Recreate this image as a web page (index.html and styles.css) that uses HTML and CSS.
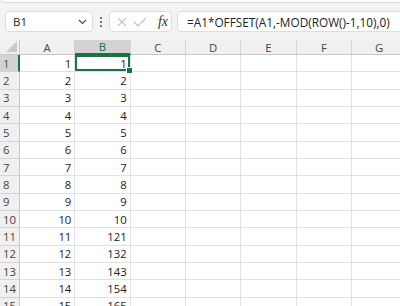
FILE: index.html
```html
<!DOCTYPE html>
<html>
<head>
    <title>Foglio</title>
    <link rel="stylesheet" href="styles.css">
</head>
<body>
    <div class="ribbon-edge"></div>

    <div class="formula-row">
        <div class="name-box">
            <span>B1</span>
            <svg class="chevron" width="9" height="6" viewBox="0 0 9 6"><path d="M1 1 L4.5 4.5 L8 1" fill="none" stroke="#444" stroke-width="1.1"/></svg>
        </div>
        <div class="dots"><i></i><i></i><i></i></div>
        <div class="fx-buttons">
            <svg width="10" height="10" viewBox="0 0 10 10"><path d="M1 1 L9 9 M9 1 L1 9" stroke="#bdbdbd" stroke-width="1.1"/></svg>
            <svg width="14" height="10" viewBox="0 0 14 10"><path d="M1 5 L5 9 L13 1" fill="none" stroke="#bdbdbd" stroke-width="1.1"/></svg>
            <span class="fx">fx</span>
        </div>
        <div class="formula">=A1*OFFSET(A1,-MOD(ROW()-1,10),0)</div>
    </div>

    <div class="sheet" id="sheet"></div>

    <script>
        var cols = ['A', 'B', 'C', 'D', 'E', 'F', 'G'];
        var sheet = document.getElementById('sheet');
        var html = '<div class="corner"><span class="tri"></span></div>';
        for (var c = 0; c < cols.length; c++) {
            html += '<div class="col-head' + (c == 1 ? ' sel' : '') + '">' + cols[c] + '</div>';
        }
        for (var r = 1; r <= 15; r++) {
            var b = r <= 10 ? r : r * 11;
            html += '<div class="row-head' + (r == 1 ? ' sel' : '') + '">' + r + '</div>';
            html += '<div class="cell">' + r + '</div>';
            html += '<div class="cell' + (r == 1 ? ' active' : '') + '">' + b + (r == 1 ? '<span class="handle"></span>' : '') + '</div>';
            for (var k = 2; k < cols.length; k++) {
                html += '<div class="cell"></div>';
            }
        }
        sheet.innerHTML = html;
    </script>
</body>
</html>
```

FILE: styles.css
```css
body {
    margin: 0;
    background-color: #f3f3f3;
    font-family: "Open Sans", "Noto Sans", sans-serif;
    color: #222;
    overflow: hidden;
}

.ribbon-edge {
    height: 2px;
    margin-left: 1px;
    background-color: #fbfbfb;
    border-bottom: 1px solid #dcdcdc;
    border-left: 1px solid #dcdcdc;
    border-bottom-left-radius: 4px;
}

.formula-row {
    display: flex;
    align-items: center;
    height: 21px;
    padding: 8px 0 0 5px;
}

.name-box {
    display: flex;
    align-items: center;
    justify-content: space-between;
    box-sizing: border-box;
    width: 88px;
    height: 21px;
    padding: 0 5px 0 7px;
    background-color: #fff;
    border: 1px solid #dedede;
    border-radius: 4px;
    font-size: 11.5px;
}

.dots {
    display: flex;
    flex-direction: column;
    gap: 2px;
    margin: 0 7px 0 7px;
}

.dots i {
    width: 2px;
    height: 2px;
    background-color: #777;
}

.fx-buttons {
    display: flex;
    align-items: center;
    box-sizing: border-box;
    width: 63px;
    height: 21px;
    padding: 0 3px 0 7px;
    gap: 6px;
    background-color: #fff;
    border: 1px solid #dedede;
    border-radius: 4px;
}

.fx {
    margin-left: 5px;
    font-family: "Liberation Serif", serif;
    font-style: italic;
    font-size: 14px;
    color: #333;
}

.formula {
    flex: 1;
    box-sizing: border-box;
    height: 21px;
    margin-left: 5px;
    padding: 2px 0 0 9px;
    background-color: #fff;
    border: 1px solid #dedede;
    border-right: none;
    border-radius: 4px 0 0 4px;
    font-size: 11.8px;
    white-space: nowrap;
}

.sheet {
    display: grid;
    grid-template-columns: 20px repeat(7, 55.33px);
    grid-template-rows: 15px repeat(15, 17.33px);
    margin-top: 8px;
    background-color: #fff;
    font-size: 11.3px;
}

.corner {
    position: relative;
    background-color: #f0f0f0;
    border-right: 1px solid #c8c8c8;
    border-bottom: 1px solid #c8c8c8;
}

.corner .tri {
    position: absolute;
    right: 2px;
    bottom: 2px;
    width: 0;
    height: 0;
    border-left: 11px solid transparent;
    border-bottom: 11px solid #c9c9c9;
}

.col-head {
    display: flex;
    align-items: center;
    justify-content: center;
    background-color: #f0f0f0;
    border-right: 1px solid #d4d4d4;
    border-bottom: 1px solid #c8c8c8;
    color: #444;
}

.col-head.sel {
    background-color: #d3d3d3;
    border-bottom: 2px solid #1e7145;
    color: #1e6b43;
}

.row-head {
    display: flex;
    align-items: center;
    padding-left: 3px;
    background-color: #f0f0f0;
    border-right: 1px solid #c8c8c8;
    border-bottom: 1px solid #d4d4d4;
    color: #444;
}

.row-head.sel {
    background-color: #d3d3d3;
    border-right: 2px solid #1e7145;
    color: #1e6b43;
}

.cell {
    display: flex;
    align-items: center;
    justify-content: flex-end;
    padding-right: 3px;
    border-right: 1px solid #e1e1e1;
    border-bottom: 1px solid #e1e1e1;
    color: #222;
}

.cell.active {
    position: relative;
    box-shadow: inset 0 0 0 2px #1e7145;
}

.handle {
    position: absolute;
    right: -3px;
    bottom: -3px;
    width: 5px;
    height: 5px;
    background-color: #1e7145;
    border: 1px solid #fff;
    z-index: 2;
}
```
